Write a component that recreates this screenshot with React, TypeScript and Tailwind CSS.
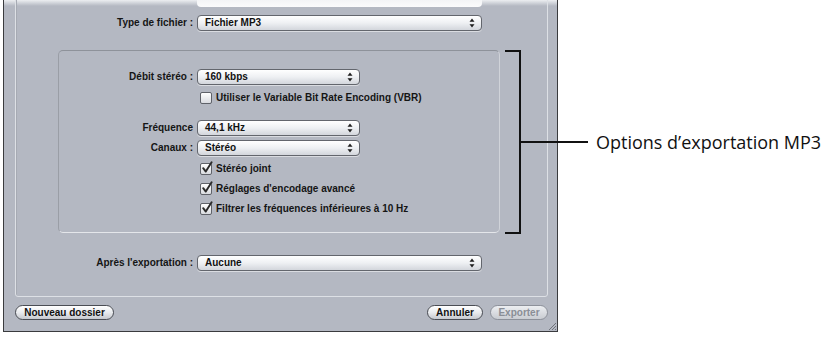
import React from 'react';

const font = { fontFamily: '"Liberation Sans", Arial, sans-serif' };

function Arrows() {
  return (
    <svg width="6" height="10" viewBox="0 0 6 10" className="shrink-0">
      <path d="M3 0.5 L5.5 3.8 L0.5 3.8 Z" fill="#1e1e1e" />
      <path d="M3 9.5 L5.5 6.2 L0.5 6.2 Z" fill="#1e1e1e" />
    </svg>
  );
}

function Popup({ value, width }: { value: string; width: string }) {
  return (
    <div
      className={`${width} h-[16px] flex items-center justify-between pl-[7px] pr-[6px] rounded-[4px] border border-[#63666d] bg-gradient-to-b from-white via-[#eef0f3] to-[#d3d6dc] shadow-[0_1px_0_rgba(255,255,255,0.5)]`}
    >
      <span className="text-[10px] font-bold text-[#111] leading-none">{value}</span>
      <Arrows />
    </div>
  );
}

function Checkbox({ checked, label }: { checked?: boolean; label: string }) {
  return (
    <div className="flex items-center h-[12px] gap-[4px]">
      <div className="relative w-[12px] h-[12px] rounded-[2px] border border-[#5f6269] bg-gradient-to-b from-white to-[#d9dbe0]">
        {checked && (
          <svg width="12" height="13" viewBox="0 0 12 13" className="absolute left-[0px] top-[-3px]">
            <path d="M2.2 7.2 L4.8 10.6 L10.6 1.2" fill="none" stroke="#2a2a2a" strokeWidth="1.9" strokeLinecap="round" strokeLinejoin="round" />
          </svg>
        )}
      </div>
      <span className="text-[10px] font-bold text-[#151515] leading-none">{label}</span>
    </div>
  );
}

function Row({ label, labelW, children }: { label: string; labelW: string; children: React.ReactNode }) {
  return (
    <div className="flex items-center gap-[4px]">
      <span className={`${labelW} text-right text-[10px] font-bold text-[#151515] leading-none`}>{label}</span>
      {children}
    </div>
  );
}

export default function App() {
  return (
    <div className="relative w-[823px] h-[337px] bg-white overflow-hidden" style={font}>
      {/* Window */}
      <div className="ml-[3px] w-[555px] h-[332px] overflow-hidden border-x border-b border-[#3a3b3e] bg-[linear-gradient(to_bottom,#eceef1_0px,#b4b8c2_6px,#b4b8c2_100%)] flex flex-col">
        {/* Outer group box */}
        <div className="mt-[-10px] ml-[11px] w-[533px] h-[307px] border border-[#dde0e5] rounded-[3px] shadow-[inset_1px_1px_0_#a6aab3] flex flex-col">
          <div className="ml-[181px]">
            <div className="w-[285px] h-[16px] rounded-[4px] bg-gradient-to-b from-[#e9ebee] to-[#fbfbfc]" />
          </div>

          <div className="mt-[8px]">
            <Row label="Type de fichier :" labelW="w-[177px]">
              <Popup value="Fichier MP3" width="w-[285px]" />
            </Row>
          </div>

          {/* Inner group box */}
          <div className="mt-[19px] ml-[42px] w-[442px] h-[183px] rounded-[5px] border border-t-[#8e929a] border-l-[#9a9ea6] border-b-[#e4e6ea] border-r-[#d0d3d9] flex flex-col pt-[18px]">
            <Row label="Débit stéréo :" labelW="w-[134px]">
              <Popup value="160 kbps" width="w-[163px]" />
            </Row>
            <div className="mt-[7px] ml-[141px]">
              <Checkbox label="Utiliser le Variable Bit Rate Encoding (VBR)" />
            </div>
            <div className="mt-[16px]">
              <Row label="Fréquence" labelW="w-[134px]">
                <Popup value="44,1 kHz" width="w-[163px]" />
              </Row>
            </div>
            <div className="mt-[4px]">
              <Row label="Canaux :" labelW="w-[134px]">
                <Popup value="Stéréo" width="w-[163px]" />
              </Row>
            </div>
            <div className="mt-[7px] ml-[141px] flex flex-col gap-[8px]">
              <Checkbox checked label="Stéréo joint" />
              <Checkbox checked label="Réglages d'encodage avancé" />
              <Checkbox checked label="Filtrer les fréquences inférieures à 10 Hz" />
            </div>
          </div>

          <div className="mt-[22px]">
            <Row label="Après l'exportation :" labelW="w-[177px]">
              <Popup value="Aucune" width="w-[285px]" />
            </Row>
          </div>
        </div>

        {/* Buttons */}
        <div className="mt-[8px] flex items-center justify-between pl-[11px] pr-[9px]">
          <button className="w-[99px] h-[15px] rounded-full border border-[#4a4d54] bg-gradient-to-b from-white via-[#e9ebee] to-[#c6c9cf] text-[10px] font-bold text-[#111] leading-none">
            Nouveau dossier
          </button>
          <div className="flex items-center gap-[7px]">
            <button className="w-[56px] h-[15px] rounded-full border border-[#4a4d54] bg-gradient-to-b from-white via-[#e9ebee] to-[#c6c9cf] text-[10px] font-bold text-[#111] leading-none">
              Annuler
            </button>
            <button className="w-[58px] h-[15px] rounded-full border border-[#8d919a] bg-gradient-to-b from-[#eceef1] to-[#c9ccd2] text-[10px] font-bold text-[#8a8e96] leading-none">
              Exporter
            </button>
          </div>
        </div>
        <div className="flex-1 flex justify-end items-end">
          <svg width="10" height="10" viewBox="0 0 10 10">
            <path d="M9 2 L2 9 M9 5 L5 9 M9 8 L8 9" stroke="#6f737b" strokeWidth="1" />
          </svg>
        </div>
      </div>

      {/* Callout */}
      <div className="absolute left-[505px] top-[50px] h-[184px] flex items-center">
        <div className="w-[16px] h-full border-y-2 border-r-2 border-[#111]" />
        <div className="w-[67px] h-[2px] bg-[#111]" />
        <span className="ml-[8px] text-[18px] text-[#111] whitespace-nowrap" style={{ fontFamily: '"Open Sans", sans-serif' }}>
          Options d’exportation MP3
        </span>
      </div>
    </div>
  );
}
